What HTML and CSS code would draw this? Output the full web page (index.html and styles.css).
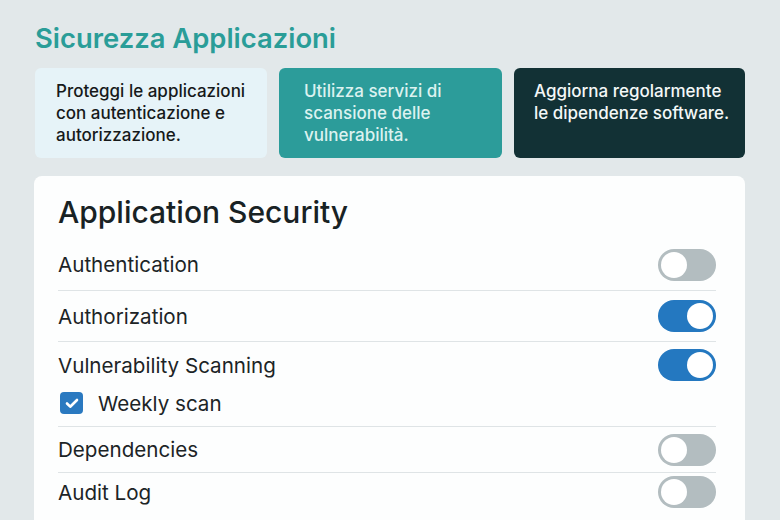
FILE: index.html
```html
<!DOCTYPE html>
<html lang="it">
<head>
<meta charset="utf-8">
<link rel="stylesheet" href="styles.css">
</head>
<body>
<div class="page">
  <h1 class="title">Sicurezza Applicazioni</h1>
  <div class="cards">
    <div class="card card-light">Proteggi le applicazioni con autenticazione e autorizzazione.</div>
    <div class="card card-teal">Utilizza servizi di scansione delle vulnerabilità.</div>
    <div class="card card-dark">Aggiorna regolarmente le dipendenze software.</div>
  </div>
  <div class="panel">
    <h2 class="panel-title">Application Security</h2>
    <div class="row row-first">
      <span class="label">Authentication</span>
      <span class="toggle"><span class="knob"></span></span>
    </div>
    <div class="row">
      <span class="label">Authorization</span>
      <span class="toggle on"><span class="knob"></span></span>
    </div>
    <div class="group">
      <div class="row row-head">
        <span class="label">Vulnerability Scanning</span>
        <span class="toggle on"><span class="knob"></span></span>
      </div>
      <div class="sub">
        <span class="check"><svg viewBox="0 0 22 22" width="22" height="22"><path d="M6 11.5l3.2 3.2L16 8" fill="none" stroke="#fff" stroke-width="2.6" stroke-linecap="round" stroke-linejoin="round"/></svg></span>
        <span class="label">Weekly scan</span>
      </div>
    </div>
    <div class="row row-dep">
      <span class="label">Dependencies</span>
      <span class="toggle"><span class="knob"></span></span>
    </div>
    <div class="row row-last">
      <span class="label">Audit Log</span>
      <span class="toggle"><span class="knob"></span></span>
    </div>
  </div>
</div>
</body>
</html>
```
FILE: styles.css
```css
* { box-sizing: border-box; }
html, body { margin: 0; padding: 0; }
body {
  background: #e2e8ea;
  font-family: Inter, "Noto Sans", sans-serif;
  width: 780px;
  height: 520px;
  overflow: hidden;
}
.page {
  padding: 20px 35px 0 34px;
  height: 520px;
  overflow: hidden;
}
.title {
  margin: 0 0 0 1px;
  font-size: 27.4px;
  line-height: 36px;
  font-weight: 600;
  color: #2a9d98;
  letter-spacing: 0;
}
.cards {
  margin-top: 12px;
  display: grid;
  grid-template-columns: 232px 223px 231px;
  gap: 12px;
  margin-left: 1px;
}
.card {
  height: 90px;
  border-radius: 6px;
  padding: 12px 14px 0 21px;
  font-size: 17px;
  line-height: 22px;
  font-weight: 500;
}
.card-light {
  background: #e6f3f8;
  color: #16191a;
}
.card-teal {
  background: #2c9c9a;
  color: #dcf2f0;
  padding-left: 25px;
}
.card-dark {
  background: #123135;
  color: #f4f8f8;
  padding-left: 20px;
}
.panel {
  margin-top: 18px;
  background: #fdfefe;
  border-radius: 8px 8px 0 0;
  padding: 19px 29px 0 24px;
  height: 344px;
}
.panel-title {
  margin: 0 0 10px 0;
  font-size: 30px;
  line-height: 34px;
  font-weight: 500;
  color: #182224;
}
.row {
  display: flex;
  align-items: center;
  justify-content: space-between;
  height: 51px;
  border-bottom: 1px solid #dfe4e6;
}
.row-first { height: 52px; }
.row-head { height: 46px; border-bottom: none; }
.group { border-bottom: 1px solid #dfe4e6; padding-bottom: 8px; }
.row-dep { height: 46px; }
.row-last { height: 38px; border-bottom: none; }
.label {
  font-size: 20.6px;
  color: #1c2426;
}
.sub {
  display: flex;
  align-items: center;
  height: 30px;
  padding-left: 2px;
  gap: 15px;
}
.check {
  width: 23px;
  height: 22px;
  border-radius: 4px;
  background: #2a79c0;
  display: flex;
  align-items: center;
  justify-content: center;
}
.toggle {
  width: 58px;
  height: 32px;
  border-radius: 16px;
  background: #b3bdc0;
  padding: 3px;
  display: flex;
  justify-content: flex-start;
}
.toggle.on {
  background: #2478c0;
  justify-content: flex-end;
}
.knob {
  width: 26px;
  height: 26px;
  border-radius: 50%;
  background: #ffffff;
}
```
